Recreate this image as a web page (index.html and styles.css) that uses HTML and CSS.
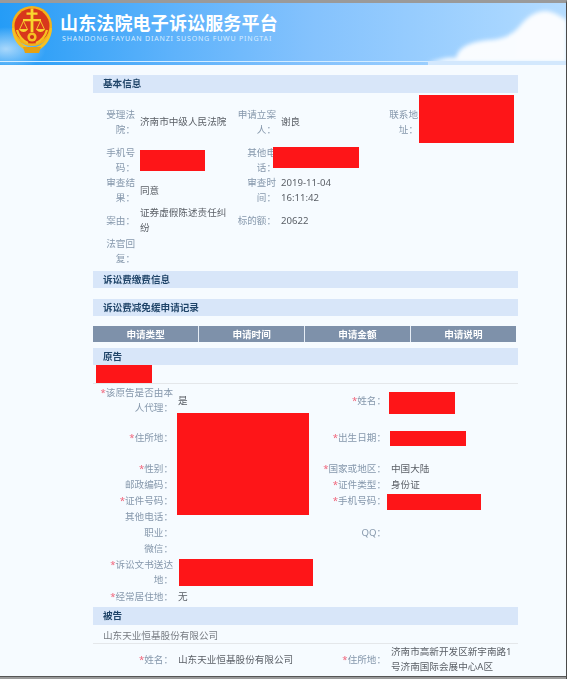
FILE: index.html
```html
<!DOCTYPE html>
<html lang="zh">
  <head>
    <meta charset="utf-8">
    <title>山东法院电子诉讼服务平台</title>
    <link rel="stylesheet" href="styles.css">
  </head>
  <body>

    <div class="header">
      <svg class="cloud" width="567" height="62" viewBox="0 0 567 62">
        <defs>
          <radialGradient id="patch" cx="0.5" cy="0.5" r="0.5">
            <stop offset="0" stop-color="#fff" stop-opacity="0.6"/>
            <stop offset="1" stop-color="#fff" stop-opacity="0"/>
          </radialGradient>
          <filter id="soft"><feGaussianBlur stdDeviation="2"/></filter>
        </defs>
        <ellipse cx="6" cy="46" rx="40" ry="22" fill="url(#patch)"/>
        <path d="M428 60 C440 56 448 54 456 55 C458 45 468 39 488 37 C504 36 511 32 518 25 C526 15 534 8 546 8 C556 9 560 14 567 17 L567 60 Z" fill="#fff" opacity="0.94" filter="url(#soft)"/>
      </svg>

      <svg class="logo" width="40" height="47" viewBox="0 0 40 47">
        <circle cx="20" cy="20" r="20" fill="#f3b21a"/>
        <circle cx="20" cy="20" r="17.5" fill="#d8371c"/>
        <path d="M2 22 C3 32 9 39 16 41 L13 44 C6 40 0 32 0 22 Z M38 22 C37 32 31 39 24 41 L27 44 C34 40 40 32 40 22 Z" fill="#f6c021"/>
        <path d="M5 24 C7 31 11 35 16 37 M35 24 C33 31 29 35 24 37" fill="none" stroke="#f6c021" stroke-width="2.4"/>
        <path d="M11 41 L29 41 L27 47 L13 47 Z" fill="#e6a112"/>
        <path d="M18.6 2.5 L21.4 2.5 L21.4 6.5 L25.5 6.5 L25.5 8.8 L21.4 8.8 L21.4 13 L29 13 L29 15.2 L21.4 15.2 L21.4 26 L18.6 26 L18.6 15.2 L11 15.2 L11 13 L18.6 13 L18.6 8.8 L14.5 8.8 L14.5 6.5 L18.6 6.5 Z" fill="#f9d62e"/>
        <path d="M11.5 15 L7.5 23.5 L15.5 23.5 Z M28.5 15 L24.5 23.5 L32.5 23.5 Z" fill="none" stroke="#f9d62e" stroke-width="0.9"/>
        <path d="M7 23.5 Q11.5 28.5 16 23.5 Z M24 23.5 Q28.5 28.5 33 23.5 Z" fill="#f9d62e"/>
        <circle cx="20" cy="31" r="4.6" fill="#f6c021"/>
        <circle cx="20" cy="31" r="2.1" fill="#c9301c"/>
      </svg>

      <div class="brand">
        <div class="brand-cn">山东法院电子诉讼服务平台</div>
        <div class="brand-en">SHANDONG FAYUAN DIANZI SUSONG FUWU PINGTAI</div>
      </div>
    </div>

    <div class="main">

      <div class="bar first">基本信息</div>
      <div class="info">
        <div class="lbl">受理法院：</div><div class="val">济南市中级人民法院</div>
        <div class="lbl">申请立案人：</div><div class="val">谢良</div>
        <div class="lbl">联系地址：</div>

        <div class="lbl">手机号码：</div><div class="val"></div>
        <div class="lbl">其他电话：</div><div class="val"></div>
        <div></div>

        <div class="lbl">审查结果：</div><div class="val">同意</div>
        <div class="lbl">审查时间：</div><div class="val">2019-11-04<br>16:11:42</div>
        <div></div>

        <div class="lbl">案由：</div><div class="val">证券虚假陈述责任纠纷</div>
        <div class="lbl">标的额：</div><div class="val">20622</div>
        <div></div>

        <div class="lbl">法官回复：</div>
      </div>

      <div class="bar fee">诉讼费缴费信息</div>
      <div class="bar relief">诉讼费减免缓申请记录</div>

      <table class="apply">
        <tr>
          <th>申请类型</th>
          <th>申请时间</th>
          <th>申请金额</th>
          <th>申请说明</th>
        </tr>
      </table>

      <div class="bar plaintiff">原告</div>
      <div class="party"></div>
      <div class="form plaintiff-form">
        <div class="lbl"><i>*</i>该原告是否由本人代理：</div><div class="val">是</div>
        <div class="lbl"><i>*</i>姓名：</div><div class="val"></div>

        <div class="lbl"><i>*</i>住所地：</div><div class="val"></div>
        <div class="lbl"><i>*</i>出生日期：</div><div class="val"></div>

        <div class="lbl"><i>*</i>性别：</div><div class="val"></div>
        <div class="lbl"><i>*</i>国家或地区：</div><div class="val">中国大陆</div>

        <div class="lbl">邮政编码：</div><div class="val"></div>
        <div class="lbl"><i>*</i>证件类型：</div><div class="val">身份证</div>

        <div class="lbl"><i>*</i>证件号码：</div><div class="val"></div>
        <div class="lbl"><i>*</i>手机号码：</div><div class="val"></div>

        <div class="lbl">其他电话：</div><div class="val"></div>
        <div></div><div></div>

        <div class="lbl">职业：</div><div class="val"></div>
        <div class="lbl">QQ：</div><div class="val"></div>

        <div class="lbl">微信：</div><div class="val"></div>
        <div></div><div></div>

        <div class="lbl"><i>*</i>诉讼文书送达地：</div><div class="val"></div>
        <div></div><div></div>

        <div class="lbl"><i>*</i>经常居住地：</div><div class="val">无</div>
      </div>

      <div class="bar defendant">被告</div>
      <div class="party">山东天业恒基股份有限公司</div>
      <div class="form defendant-form">
        <div class="lbl"><i>*</i>姓名：</div><div class="val">山东天业恒基股份有限公司</div>
        <div class="lbl"><i>*</i>住所地：</div><div class="val">济南市高新开发区新宇南路1号济南国际会展中心A区</div>
      </div>

      <div class="redact r1"></div>
      <div class="redact r2"></div>
      <div class="redact r3"></div>
      <div class="redact r4"></div>
      <div class="redact r5"></div>
      <div class="redact r6"></div>
      <div class="redact r7"></div>
      <div class="redact r8"></div>
      <div class="redact r9"></div>
    </div>

    <div class="footer"></div>

  </body>
</html>
```

FILE: styles.css
```css
* {
  margin: 0;
  padding: 0;
  box-sizing: border-box;
}

html, body {
  width: 100%;
  height: 100%;
  overflow: hidden;
}

body {
  display: flex;
  flex-direction: column;
  background: #f6fbff;
  font-family: "Noto Sans", "Noto Sans CJK SC", sans-serif;
  font-size: 9.6px;
  line-height: 15px;
  color: #5a5f66;
  border-top: 3px solid #9a9a9a;
  border-right: 1px solid #4a4a4a;
  filter: blur(0.25px);
}

.header {
  position: relative;
  flex: none;
  display: flex;
  align-items: flex-start;
  height: 62px;
  padding: 3px 0 0 12px;
  overflow: hidden;
  background: linear-gradient(90deg, #259cf6 0%, #5db2fb 30%, #84c2fd 55%, #a8d6ff 90%, #b5dcff 100%);
}

/* light line and the pale strip under the clouds */
.header::before {
  content: "";
  position: absolute;
  z-index: 1;
  left: 0;
  width: 428px;
  bottom: 3px;
  height: 1px;
  background: #d3ecff;
}

.header::after {
  content: "";
  position: absolute;
  z-index: 1;
  left: 428px;
  right: 0;
  bottom: 0;
  height: 4px;
  background: #d3e8fd;
}

.cloud {
  position: absolute;
  left: 0;
  top: 0;
}

.logo {
  position: relative;
  flex: none;
}

.brand {
  position: relative;
  margin-left: 8px;
  color: #fff;
}

.brand-cn {
  font-size: 18px;
  line-height: 24px;
  margin-top: 5px;
  font-weight: 700;
  letter-spacing: 0.15px;
  white-space: nowrap;
}

.brand-en {
  margin: -1px 0 0 2px;
  font-size: 7px;
  line-height: 9px;
  letter-spacing: 0.83px;
  color: #d6ecff;
  white-space: nowrap;
}

.main {
  position: relative;
  flex: 1;
  width: 425px;
  margin-left: 93px;
}

.bar {
  height: 17px;
  padding-left: 10px;
  line-height: 17px;
  font-weight: 700;
  color: #1f4468;
  background: #d8e6f9;
}

.first {
  height: 18px;
  margin-top: 10px;
  line-height: 18px;
}

.fee {
  margin-top: 5px;
}

.relief {
  margin-top: 11px;
}

.plaintiff {
  margin-top: 6px;
}

.defendant {
  height: 18px;
  margin-top: 3px;
  line-height: 18px;
}

.lbl {
  align-self: center;
  text-align: right;
  color: #8698ac;
}

.lbl i {
  font-style: normal;
  color: #f0647a;
}

.val {
  align-self: center;
}

.info {
  display: grid;
  grid-template-columns: 40px 91px 40px 92px 40px;
  grid-template-rows: 47px 30px 30px 30px 31px;
  column-gap: 5px;
  padding: 5px 0 0 2px;
}

.apply {
  width: 423px;
  margin-top: 10px;
  border-collapse: collapse;
  table-layout: fixed;
}

.apply th {
  height: 16px;
  padding: 0;
  line-height: 15px;
  font-size: 9.6px;
  font-weight: 700;
  color: #fff;
  background: #7e91aa;
  border-left: 1px solid #e6edf5;
}

.apply th:first-child {
  border-left: none;
}

.party {
  height: 19px;
  padding-left: 10px;
  line-height: 21px;
  color: #777c82;
  border-bottom: 1px solid #e4e7ea;
}

.form {
  display: grid;
  grid-template-columns: 76px 133px 70px 1fr;
  column-gap: 5px;
  padding-left: 4px;
}

.plaintiff-form {
  padding-top: 1px;
  grid-template-rows: 30px 45px 16px 16px 16px 16px 16px 16px 32px 16px;
}

.defendant-form {
  grid-template-rows: 30px;
}

/* masked personal data, painted over the page */
.redact {
  position: absolute;
  background: #fe1518;
}

.r1 { left: 326px; top: 30px; width: 95px; height: 48px; }
.r2 { left: 47px; top: 85px; width: 65px; height: 21px; }
.r3 { left: 180px; top: 82px; width: 86px; height: 21px; }
.r4 { left: 3px; top: 300px; width: 56px; height: 18px; }
.r5 { left: 296px; top: 327px; width: 66px; height: 22px; }
.r6 { left: 84px; top: 348px; width: 132px; height: 102px; }
.r7 { left: 297px; top: 366px; width: 76px; height: 15px; }
.r8 { left: 294px; top: 429px; width: 94px; height: 16px; }
.r9 { left: 86px; top: 494px; width: 134px; height: 27px; }

.footer {
  flex: none;
  height: 3px;
  background: #9a9a9a;
  border-top: 1px solid #555;
}
```
